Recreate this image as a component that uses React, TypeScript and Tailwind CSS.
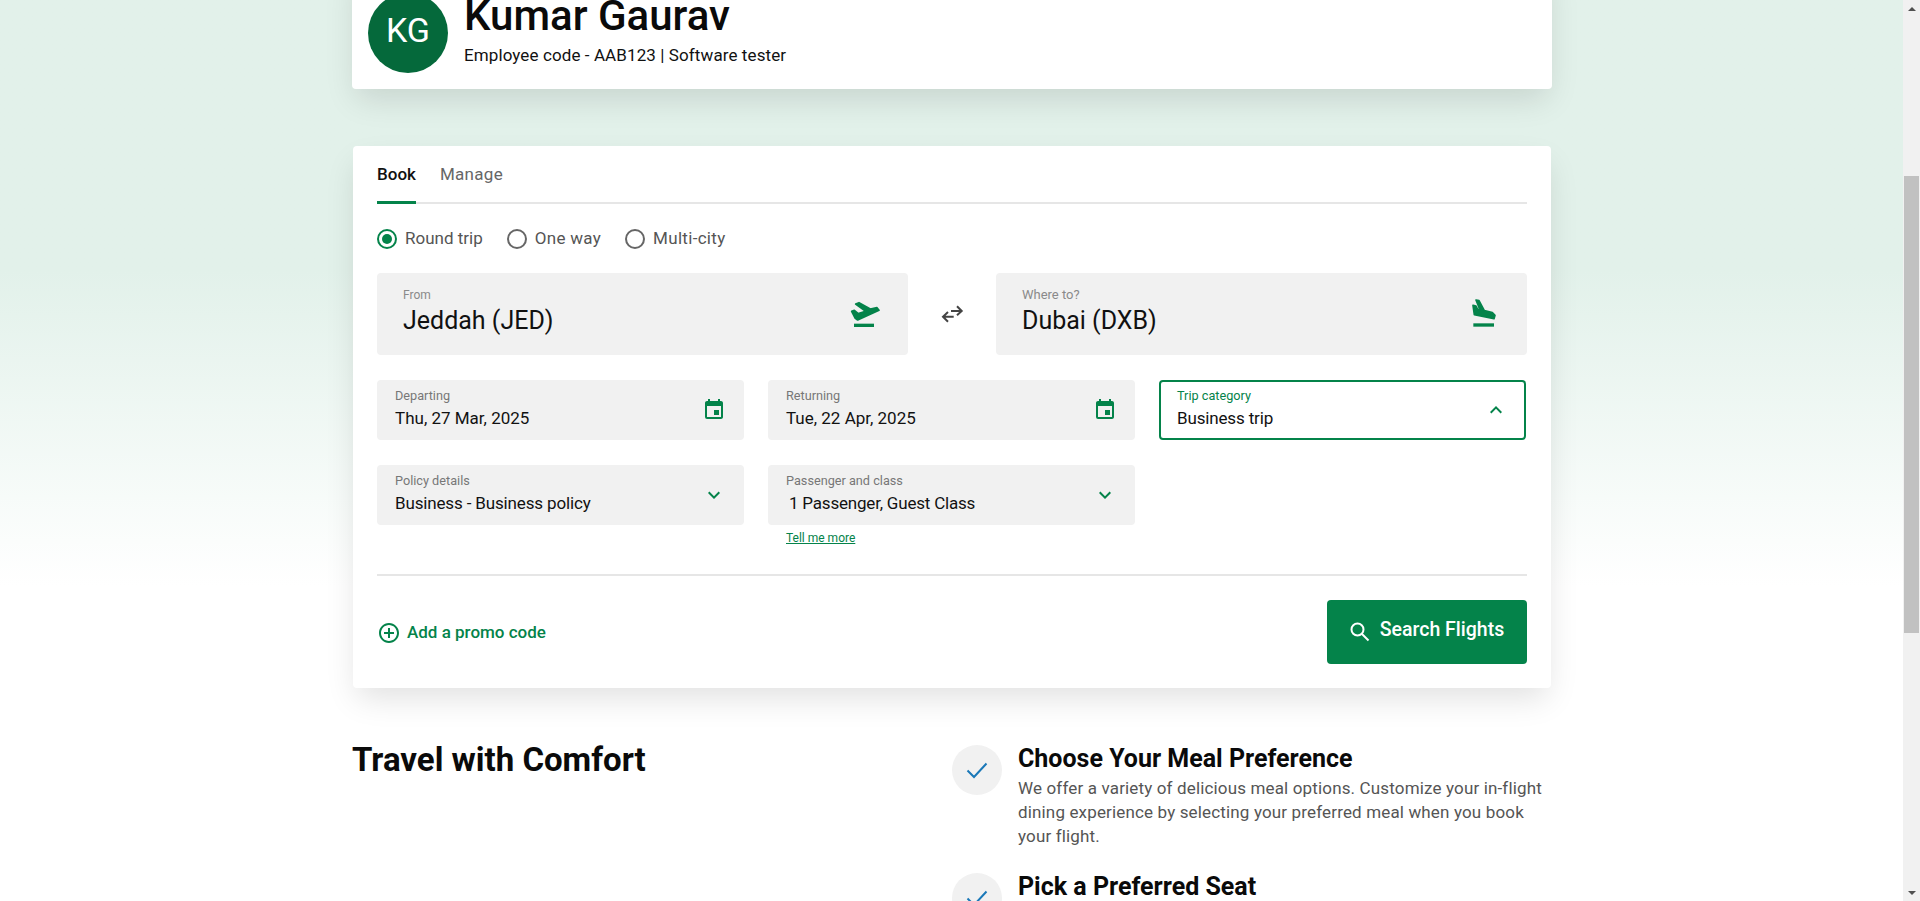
import { MdEvent, MdKeyboardArrowDown, MdKeyboardArrowUp, MdAddCircleOutline } from "react-icons/md";

const font = { fontFamily: '"Roboto", "Liberation Sans", sans-serif' };

function Field({ label, value, icon, active, valueClass }: { label: string; value: string; icon: React.ReactNode; active?: boolean; valueClass?: string }) {
  return (
    <div className={active ? "h-[60px] rounded border-2 border-[#04834a] bg-white pl-[16px] pr-[16px] flex items-center justify-between" : "h-[60px] rounded bg-[#f1f1f1] pl-[18px] pr-[18px] flex items-center justify-between"}>
      <div className="flex flex-col pb-[3px]">
        <span className={active ? "text-[12.7px] leading-[16px] text-[#04834a]" : "text-[12.7px] leading-[16px] text-[#777777]"}>{label}</span>
        <span className={"text-[17px] leading-[24px] mt-[2px] text-[#111111] " + (valueClass ?? "")}>{value}</span>
      </div>
      {icon}
    </div>
  );
}

function Feature({ title, lines }: { title: string; lines: string[] }) {
  return (
    <div className="flex gap-[16px] mb-[25px]">
      <div className="w-[50px] h-[50px] shrink-0 rounded-full bg-[#f1f1f1] flex items-center justify-center">
        <svg width="24" height="24" viewBox="0 0 24 24" fill="none" stroke="#1a78b8" strokeWidth="2"><path d="M2.5 12.5 L9 19 L21.5 5.5" /></svg>
      </div>
      <div className="flex-1">
        <h3 className="text-[25px] leading-[28px] font-bold text-[#0a0a0a]">{title}</h3>
        <p className="text-[17px] leading-[24px] tracking-[0.15px] text-[#555555] mt-[3px] whitespace-nowrap">{lines.map((l) => <span key={l} className="block">{l}</span>)}</p>
      </div>
    </div>
  );
}

export default function App() {
  return (
    <div className="h-[901px] flex overflow-hidden bg-white" style={font}>
      <div className="flex-1 overflow-hidden bg-gradient-to-b from-[#e2f1ea] from-[0%] via-[#e2f1ea] via-[30%] to-[#ffffff] to-[65%]">
        <div className="w-[1200px] ml-[352px] -mt-[39px]">
          <div className="h-[128px] bg-white rounded shadow-[0_14px_30px_-4px_rgba(0,0,0,0.12)] pl-[16px] pt-[32px] flex gap-[16px]">
            <div className="w-[80px] h-[80px] rounded-full bg-[#05693b] text-white flex items-center justify-center text-[34px] pb-[5px]">KG</div>
            <div className="flex flex-col">
              <h1 className="text-[42px] leading-[48px] font-medium text-[#0a0a0a] -mt-[1px]">Kumar Gaurav</h1>
              <p className="text-[17px] leading-[24px] tracking-[0.1px] text-[#111111] mt-[3px]">Employee code - AAB123 | Software tester</p>
            </div>
          </div>

          <div className="mt-[57px] ml-[1px] w-[1198px] h-[542px] bg-white rounded shadow-[0_14px_30px_-4px_rgba(0,0,0,0.12)] px-[24px]">
            <div className="flex gap-[24px] h-[58px] border-b-2 border-[#e6e6e6] pt-[16px]">
              <div className="h-[42px] border-b-[3px] border-[#04834a] text-[17px] font-medium text-[#111111] leading-[24px]">Book</div>
              <div className="text-[17px] tracking-[0.3px] text-[#666666] leading-[24px]">Manage</div>
            </div>
            <div className="flex gap-[24px] mt-[25px] h-[20px] items-center text-[17px] text-[#555555]">
              <label className="flex items-center gap-[8px]">
                <span className="w-[20px] h-[20px] rounded-full border-2 border-[#04834a] flex items-center justify-center"><span className="w-[10px] h-[10px] rounded-full bg-[#04834a]" /></span>Round trip
              </label>
              <label className="flex items-center gap-[8px] tracking-[0.3px]"><span className="w-[20px] h-[20px] rounded-full border-2 border-[#666666]" />One way</label>
              <label className="flex items-center gap-[8px] tracking-[0.3px]"><span className="w-[20px] h-[20px] rounded-full border-2 border-[#666666]" />Multi-city</label>
            </div>

            <div className="flex items-center mt-[24px]">
              <div className="w-[531px] h-[82px] rounded bg-[#f1f1f1] pl-[26px] pr-[23px] flex items-center justify-between">
                <div className="flex flex-col pb-[5px]">
                  <span className="text-[12px] leading-[16px] text-[#8a8a8a]">From</span>
                  <span className="text-[25px] leading-[32px] mt-[2px] text-[#111111]">Jeddah (JED)</span>
                </div>
                <svg width="40" height="34" viewBox="0 0 120 102" fill="#04834a" className="mt-[2px]">
                  <path d="M20 40 L28 37 L40 47 L62 40 L32 18 L42 14 L76 33 L96 29 L102 37 L38 66 L30 60 Z" stroke="#04834a" strokeWidth="5" strokeLinejoin="round" />
                  <rect x="27" y="77" width="60" height="10" />
                </svg>
              </div>
              <div className="w-[88px] flex justify-center">
                <svg width="24" height="24" viewBox="0 0 24 24" fill="none" stroke="#444444" strokeWidth="2"><path d="M11 9 H21.7 M17 4.3 L21.7 9 L17 13.3 M13.7 14.7 H3 M8 10 L3 14.7 L8 19.7" /></svg>
              </div>
              <div className="w-[531px] h-[82px] rounded bg-[#f1f1f1] pl-[26px] pr-[22px] flex items-center justify-between">
                <div className="flex flex-col pb-[5px]">
                  <span className="text-[13px] leading-[16px] text-[#8a8a8a]">Where to?</span>
                  <span className="text-[25px] leading-[32px] mt-[2px] text-[#111111]">Dubai (DXB)</span>
                </div>
                <svg width="40" height="34" viewBox="0 0 120 102" fill="#04834a" className="mb-[2px]">
                  <path d="M33 12 L42 14 L58 44 L82 50 L90 58 L87 68 L28 56 L24 28 L33 30 L38 40 L45 42 Z" stroke="#04834a" strokeWidth="5" strokeLinejoin="round" />
                  <rect x="25" y="82" width="62" height="10" />
                </svg>
              </div>
            </div>

            <div className="grid grid-cols-[367px_367px_367px] gap-x-[24px] gap-y-[25px] mt-[25px]">
              <Field label="Departing" value="Thu, 27 Mar, 2025" icon={<MdEvent className="text-[#04834a] text-[24px]" />} />
              <Field label="Returning" value="Tue, 22 Apr, 2025" icon={<MdEvent className="text-[#04834a] text-[24px]" />} />
              <Field label="Trip category" value="Business trip" valueClass="tracking-[-0.15px]" active icon={<MdKeyboardArrowUp className="text-[#04834a] text-[24px]" />} />
              <Field label="Policy details" value="Business - Business policy" valueClass="tracking-[-0.15px]" icon={<MdKeyboardArrowDown className="text-[#04834a] text-[24px]" />} />
              <div>
                <Field label="Passenger and class" value="1 Passenger, Guest Class" valueClass="pl-[3px] tracking-[-0.2px]" icon={<MdKeyboardArrowDown className="text-[#04834a] text-[24px]" />} />
                <a className="block ml-[18px] mt-[5px] text-[12px] leading-[16px] text-[#04834a] underline">Tell me more</a>
              </div>
            </div>

            <div className="border-t-2 border-[#e6e6e6] mt-[28px] pt-[24px] flex justify-between items-start">
              <div className="flex items-center gap-[6px] text-[17px] font-medium text-[#04834a] mt-[20px]">
                <MdAddCircleOutline className="text-[24px]" />Add a promo code
              </div>
              <button className="w-[200px] h-[64px] rounded bg-[#04834a] text-white text-[19.5px] font-medium flex items-center justify-center gap-[10px]">
                <svg width="20" height="20" viewBox="0 0 20 20" fill="none" stroke="#ffffff" strokeWidth="2"><circle cx="7.5" cy="7.5" r="6" /><path d="M12 12 L18.5 18.5" /></svg>
                <span className="pb-[5px]">Search Flights</span>
              </button>
            </div>
          </div>

          <div className="grid grid-cols-2 mt-[57px]">
            <h2 className="text-[33px] leading-[40px] font-bold text-[#0a0a0a] -mt-[5px]">Travel with Comfort</h2>
            <div>
              <Feature title="Choose Your Meal Preference" lines={["We offer a variety of delicious meal options. Customize your in-flight", "dining experience by selecting your preferred meal when you book", "your flight."]} />
              <Feature title="Pick a Preferred Seat" lines={[]} />
            </div>
          </div>
        </div>
      </div>
      <div className="w-[17px] h-[901px] bg-[#f1f1f1] flex flex-col items-center">
        <div className="h-[17px] flex items-center justify-center"><div className="w-0 h-0 border-x-[4px] border-x-transparent border-b-[4px] border-b-[#505050]" /></div>
        <div className="w-[15px] h-[457px] bg-[#c1c1c1] mt-[159px]" />
        <div className="flex-1" />
        <div className="h-[17px] flex items-center justify-center"><div className="w-0 h-0 border-x-[4px] border-x-transparent border-t-[4px] border-t-[#505050]" /></div>
      </div>
    </div>
  );
}
